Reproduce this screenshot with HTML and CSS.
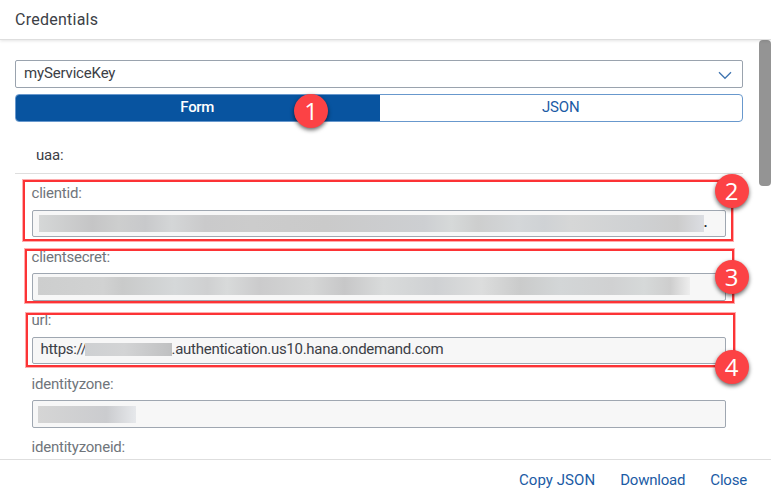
FILE: index.html
```html
<!DOCTYPE html>
<html lang="en">
<head>
<meta charset="utf-8">
<title>Credentials</title>
<link rel="stylesheet" href="styles.css">
</head>
<body>
<div class="dialog">
  <header class="header"><span class="title">Credentials</span></header>
  <main class="body">
    <div class="content">
      <div class="select"><span class="select-value">myServiceKey</span>
        <svg class="chevron" width="14" height="9" viewBox="0 0 14 9"><path d="M1 1.3 7 7.3 13 1.3" fill="none" stroke="#3f74b0" stroke-width="1.3"/></svg>
      </div>
      <div class="segments">
        <div class="segment selected"><span>Form</span></div>
        <div class="segment"><span class="json">JSON</span></div>
      </div>
      <div class="group"><span>uaa:</span></div>
      <div class="fields">
        <div class="field"><div class="label">clientid:</div><div class="input"><i class="mask mask-id"></i><span class="dot">.</span></div></div>
        <div class="field"><div class="label">clientsecret:</div><div class="input"><i class="mask mask-secret"></i></div></div>
        <div class="field"><div class="label">url:</div><div class="input url"><span class="scheme">https://</span><i class="mask mask-url"></i><span class="domain">.authentication.us10.hana.ondemand.com</span></div></div>
        <div class="field"><div class="label">identityzone:</div><div class="input"><i class="mask mask-zone"></i></div></div>
        <div class="field"><div class="label">identityzoneid:</div><div class="input"></div></div>
      </div>
    </div>
    <div class="scrollbar"><div class="thumb"></div></div>
  </main>
  <footer class="footer"><span class="copy">Copy JSON</span><span class="download">Download</span><span class="close">Close</span></footer>
  <div class="frame frame-2"></div>
  <div class="frame frame-3"></div>
  <div class="frame frame-4"></div>
  <div class="badge badge-1">1</div>
  <div class="badge badge-2">2</div>
  <div class="badge badge-3">3</div>
  <div class="badge badge-4">4</div>
</div>
</body>
</html>
```
FILE: styles.css
```css
* { box-sizing: border-box; }
body { margin: 0; background: #fff; font-family: Roboto, "Liberation Sans", sans-serif; font-size: 15px; color: #3c4046; }
.dialog { position: relative; width: 771px; height: 500px; display: flex; flex-direction: column; overflow: hidden; }
.header { height: 40px; flex: none; padding: 0 15px; line-height: 39px; font-size: 16px; letter-spacing: 0.25px; border-bottom: 1px solid #dedede; box-shadow: 0 1px 3px #0000001c; z-index: 1; }
.body { flex: 1; min-height: 0; display: flex; overflow: hidden; }
.content { flex: 1; padding: 20px 15px 0 15px; }
.select { height: 28px; border: 1px solid #9aa3ae; border-radius: 2px; display: flex; align-items: center; justify-content: space-between; padding: 0 10px 0 8px; }
.select-value { letter-spacing: -0.16px; margin-top: -2px; }
.chevron { margin-top: 2px; }
.segments { display: flex; height: 28px; margin-top: 5.5px; border: 1px solid #6898cd; border-radius: 4px; overflow: hidden; color: #1b5ba5; }
.segment { flex: 1; text-align: center; line-height: 25px; }
.json { letter-spacing: -0.2px; }
.selected { background: #0854a0; color: #fff; font-weight: 500; letter-spacing: -0.3px; padding-right: 1px; }
.group { height: 52px; border-bottom: 1px solid #dedede; padding: 22.5px 0 0 21px; line-height: 22px; letter-spacing: -0.2px; }
.fields { padding: 9.5px 17px 0 16.5px; }
.field { height: 63.5px; }
.label { height: 26.5px; line-height: 20px; color: #70757b; letter-spacing: -0.22px; }
.input { height: 27.5px; border: 1px solid #9fa7b1; border-radius: 2px; background: #f7f7f7; display: flex; align-items: center; padding-left: 6px; }
.url { padding-left: 8px; }
.mask { display: block; flex: none; }
.mask-id { width: 665px; height: 17px; margin-top: 1px; background: linear-gradient(90deg, #d5d7d7, #c5c5c6 8%, #cdcece 12%, #c8c9cb 16%, #d4d6d7 20%, #cacacb 25%, #ccc 32%, #cacaca 43%, #cdcfd2 58%, #d6d9d9 62%, #cdcece 66%, #d4d7d9 72%, #cfd2d5 76%, #d6d7d7 80%, #cfd1d3 90%, #ccc 96%, #dcdee3); }
.mask-secret { width: 652px; height: 18px; margin: -2px 0 0 -1px; background: linear-gradient(90deg, #cdcece, #d1d2d2 10%, #c9caca 13%, #d5d8d9 21%, #cfd0d1 26%, #d8dada 29%, #cbcbcc 34%, #d5d6d6 42%, #c7c7c8 47%, #d9dbdb 53%, #cfd1d3 61%, #dcdddd 68%, #cacbcb 74%, #d3d6d7 80%, #d0d1d2 88%, #d6d9d9 93%, #cecece 97%, #eee); }
.mask-url { width: 87px; height: 13px; margin-top: -1px; background: linear-gradient(90deg, #ced0d2, #d3d4d5 45%, #bfc0c1); }
.mask-zone { width: 98px; height: 17px; margin: 1px 0 0 -1px; background: linear-gradient(90deg, #d5d5d5, #cbcccf 70%, #e6e8eb); }
.dot { color: #26292d; margin: -2px 0 0 0; font-weight: 500; }
.scheme, .domain { display: block; white-space: nowrap; margin-top: -2px; }
.scheme { width: 44px; letter-spacing: -0.3px; }
.domain { letter-spacing: -0.27px; }
.scrollbar { width: 13px; padding-left: 1px; }
.thumb { height: 146px; background: #949494; border-radius: 4px; }
.footer { height: 41px; flex: none; border-top: 1px solid #dedede; display: flex; justify-content: flex-end; gap: 25px; padding-right: 24px; line-height: 41px; color: #1b5ba5; letter-spacing: -0.2px; }
.copy { letter-spacing: 0.05px; }
.frame { position: absolute; border: 2px solid #fc3335; box-shadow: 0 0 0 1px #fc333566; }
.frame-2 { left: 23px; top: 180px; width: 710px; height: 61px; }
.frame-3 { left: 25px; top: 249px; width: 709px; height: 54px; }
.frame-4 { left: 26px; top: 313px; width: 709px; height: 54px; }
.badge { position: absolute; width: 34px; height: 34px; border-radius: 50%; background: #fc4245; color: #fff; text-align: center; font: 24px/34px "Open Sans", sans-serif; box-shadow: 0 2px 4px #0009; }
.badge-1 { left: 294px; top: 94px; }
.badge-2 { left: 714.5px; top: 174px; }
.badge-3 { left: 714.5px; top: 260px; }
.badge-4 { left: 714.5px; top: 350px; }
```
